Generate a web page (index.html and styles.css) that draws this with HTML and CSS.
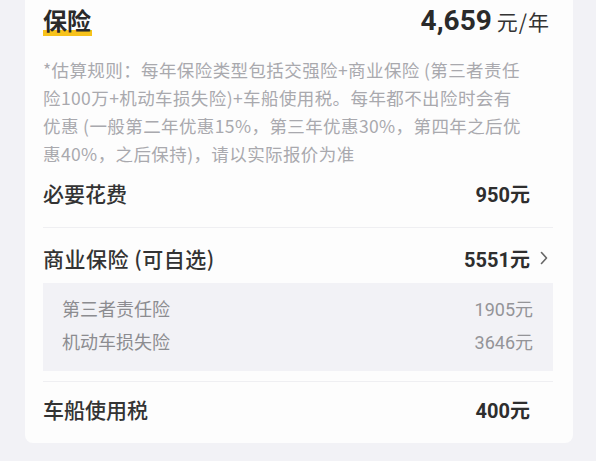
FILE: index.html
```html
<!DOCTYPE html>
<html lang="zh-CN">
<head>
<meta charset="utf-8">
<title>保险</title>
<link rel="stylesheet" href="styles.css">
</head>
<body>
<div class="card">
  <div class="header">
    <span class="title">保险</span>
    <span class="price"><span class="price-num">4,659</span><span class="price-unit">元/年</span></span>
  </div>
  <p class="desc">*估算规则：每年保险类型包括交强险+商业保险 (第三者责任<br>险100万+机动车损失险)+车船使用税。每年都不出险时会有<br>优惠 (一般第二年优惠15%，第三年优惠30%，第四年之后优<br>惠40%，之后保持)，请以实际报价为准</p>

  <div class="row row-first">
    <span class="label">必要花费</span>
    <span class="value">950元</span>
    <span class="trail"></span>
  </div>
  <div class="divider"></div>
  <div class="group">
    <div class="row row-second">
      <span class="label">商业保险 (可自选)</span>
      <span class="value">5551元</span>
      <span class="trail"><svg class="chev" width="8" height="14" viewBox="0 0 8 14"><path d="M1.5 1.5 L6.5 7 L1.5 12.5" fill="none" stroke="#666" stroke-width="1.6" stroke-linecap="round" stroke-linejoin="round"/></svg></span>
    </div>
    <div class="subbox">
      <div class="subrow"><span class="sublabel">第三者责任险</span><span class="subvalue">1905元</span></div>
      <div class="subrow"><span class="sublabel">机动车损失险</span><span class="subvalue">3646元</span></div>
    </div>
  </div>
  <div class="divider"></div>
  <div class="row row-last">
    <span class="label">车船使用税</span>
    <span class="value">400元</span>
    <span class="trail"></span>
  </div>
</div>
</body>
</html>
```

FILE: styles.css
```css
html, body {
  margin: 0;
  padding: 0;
  background: #f2f2f6;
}
body {
  width: 596px;
  height: 461px;
  overflow: hidden;
  font-family: "Noto Sans CJK SC", "Noto Sans", sans-serif;
  color: #333;
}
.card {
  margin-left: 25px;
  width: 548px;
  box-sizing: border-box;
  background: #fdfdfd;
  border-radius: 0 0 8px 8px;
  padding: 0 20px 0 18px;
}
.header {
  height: 40px;
  display: flex;
  justify-content: space-between;
  align-items: flex-start;
}
.title {
  margin-top: 4px;
  font-size: 24px;
  line-height: 32px;
  font-weight: 700;
  color: #2a2a2a;
  background: linear-gradient(to bottom, transparent 0, transparent 26px, #f7c21a 26px, #f7c21a 33px, transparent 33px);
  padding-right: 1px;
}
.price {
  margin-top: 3px;
  padding-right: 3px;
  line-height: 36px;
  display: flex;
  align-items: baseline;
}
.price-num {
  font-family: "Roboto", "Noto Sans", sans-serif;
  font-weight: 700;
  font-size: 28px;
  color: #2a2a2a;
  margin-right: 5px;
}
.price-unit {
  font-size: 21px;
  letter-spacing: 1px;
  color: #333;
}
.desc {
  margin: 16px 0 0 0;
  font-size: 17.5px;
  line-height: 28px;
  letter-spacing: 0.4px;
  color: #a9a9ae;
  white-space: nowrap;
}
.row {
  display: flex;
  align-items: center;
  height: 30px;
}
.row-first { padding: 10px 0 19px; }
.row-second { padding: 15px 0 10px; }
.row-last { padding: 12px 0 19px; }
.label {
  flex: 1;
  font-size: 21px;
  line-height: 30px;
  font-weight: 500;
  color: #333;
}
.row-second .label { letter-spacing: 0.5px; }
.value {
  font-family: "Roboto", "Noto Sans CJK SC", sans-serif;
  font-size: 20px;
  font-weight: 700;
  color: #2e2e2e;
}
.trail {
  width: 23px;
  display: flex;
  justify-content: flex-end;
  padding-right: 5px;
  box-sizing: border-box;
}
.chev { display: block; }
.divider {
  height: 1px;
  background: #efeff2;
}
.group { padding-bottom: 10px; }
.subbox {
  background: #f2f2f6;
  padding: 8px 20px 14px 19px;
}
.subrow {
  display: flex;
  justify-content: space-between;
  height: 33px;
  align-items: center;
}
.sublabel {
  font-size: 18px;
  color: #8c8c90;
}
.subvalue {
  font-family: "Roboto", "Noto Sans CJK SC", sans-serif;
  font-size: 18px;
  color: #949498;
}
```
